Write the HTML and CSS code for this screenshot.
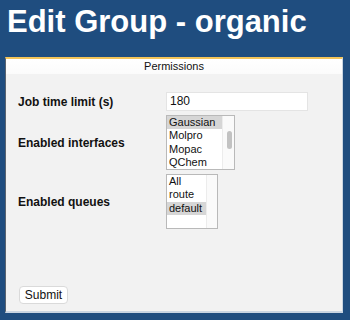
FILE: index.html
```html
<!DOCTYPE html>
<html>
<head>
<meta charset="utf-8">
<link rel="stylesheet" href="styles.css">
</head>
<body>
<h1 class="title">Edit Group - organic</h1>
<form class="panel">
  <div class="panel-head">Permissions</div>
  <div class="fields">
    <label class="lbl">Job time limit (s)</label>
    <div class="text-input">180</div>

    <label class="lbl">Enabled interfaces</label>
    <div class="listbox wide">
      <div class="options">
        <div class="opt sel">Gaussian</div>
        <div class="opt">Molpro</div>
        <div class="opt">Mopac</div>
        <div class="opt">QChem</div>
      </div>
      <div class="track"><div class="thumb"></div></div>
    </div>

    <label class="lbl">Enabled queues</label>
    <div class="listbox narrow">
      <div class="options">
        <div class="opt">All</div>
        <div class="opt">route</div>
        <div class="opt sel">default</div>
      </div>
      <div class="track"></div>
    </div>
  </div>
  <div class="actions">
    <button type="button" class="btn">Submit</button>
  </div>
</form>
</body>
</html>
```

FILE: styles.css
```css
html, body {
  margin: 0;
  padding: 0;
}
body {
  width: 350px;
  height: 320px;
  overflow: hidden;
  background: #1f4d7f;
  font-family: "Liberation Sans", Arial, sans-serif;
  color: #111;
}
.title {
  margin: 0 0 13px 0;
  padding-left: 7px;
  height: 44px;
  line-height: 43px;
  font-size: 31px;
  font-weight: bold;
  color: #ffffff;
  white-space: nowrap;
}
.panel {
  margin-left: 5px;
  width: 338px;
  height: 256px;
  box-sizing: border-box;
  background: #f2f2f2;
  border-top: 2px solid #f3c55a;
  border-left: 1px solid #5a6470;
  border-right: 1px solid #c9d5e2;
  border-bottom: 2px solid #c9d5e2;
  display: flex;
  flex-direction: column;
}
.panel-head {
  background: linear-gradient(#ffffff, #fbfbfb);
  height: 15px;
  line-height: 14px;
  font-size: 11px;
  text-align: center;
  color: #111;
}
.fields {
  padding: 18px 0 0 12px;
  display: grid;
  grid-template-columns: 148px auto;
  row-gap: 4px;
  align-items: center;
}
.lbl {
  font-size: 12px;
  font-weight: bold;
  color: #111;
}
.text-input {
  width: 142px;
  height: 19px;
  box-sizing: border-box;
  background: #fff;
  border: 1px solid #e4e4e4;
  font-size: 12px;
  line-height: 17px;
  padding-left: 3px;
  color: #111;
}
.listbox {
  height: 55px;
  box-sizing: border-box;
  background: #fff;
  border: 1px solid #b9b9b9;
  display: flex;
}
.listbox.wide { width: 69px; }
.listbox.narrow { width: 52px; }
.options {
  flex: 1;
  font-size: 11px;
}
.opt {
  height: 13.4px;
  line-height: 13.4px;
  padding-left: 2px;
  white-space: nowrap;
  color: #111;
}
.opt.sel {
  background: #d6d6d6;
}
.track {
  width: 11px;
  border-left: 1px solid #ececec;
  background: #fafafa;
  position: relative;
}
.listbox.narrow .track { width: 10px; }
.thumb {
  position: absolute;
  left: 4px;
  top: 15px;
  width: 5px;
  height: 18px;
  border-radius: 3px;
  background: #c2c2c2;
}
.actions {
  margin-top: auto;
  padding: 0 0 7px 13px;
}
.btn {
  width: 49px;
  height: 18px;
  box-sizing: border-box;
  background: #fff;
  border: 1px solid #dadada;
  border-radius: 4px;
  font-family: "Liberation Sans", Arial, sans-serif;
  font-size: 12px;
  line-height: 16px;
  padding: 0;
  color: #111;
}
```
